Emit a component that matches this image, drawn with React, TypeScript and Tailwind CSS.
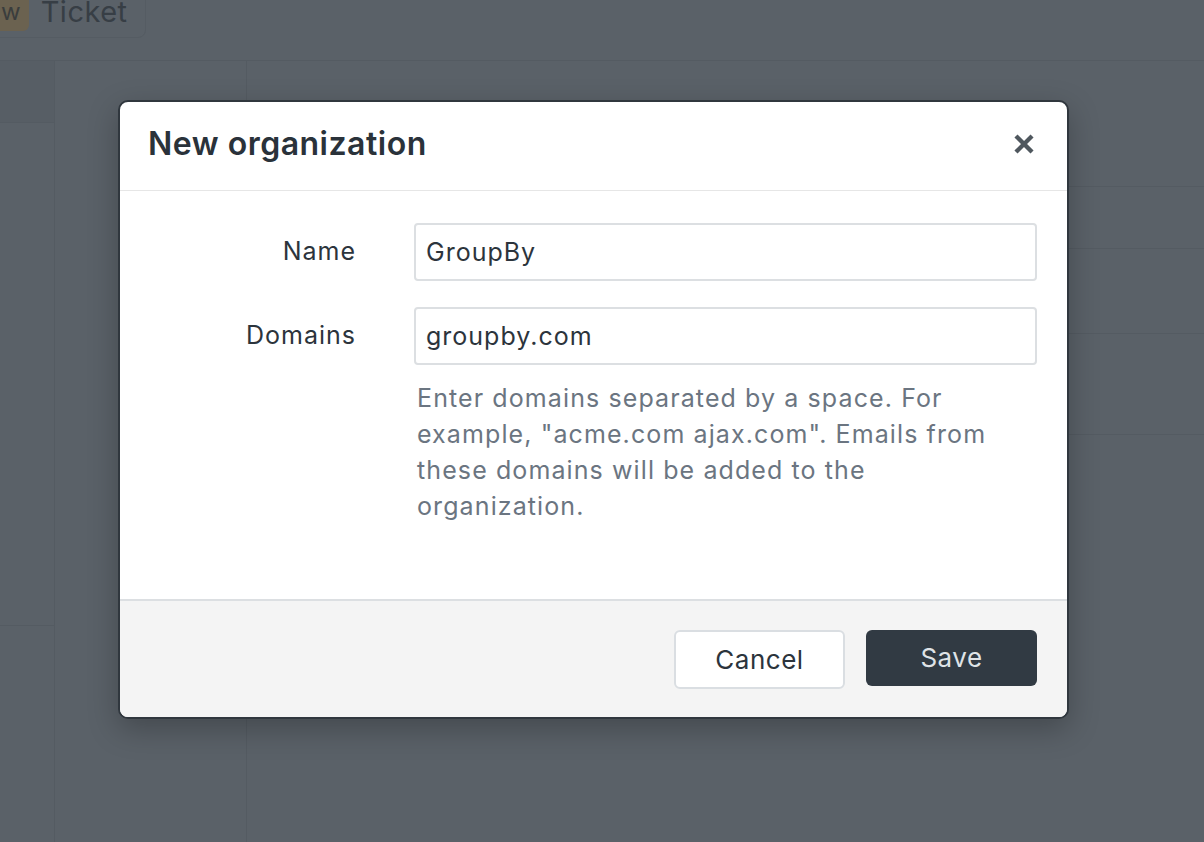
import { X } from 'lucide-react';

const font = { fontFamily: 'Inter, "Noto Sans", sans-serif' };

function Backdrop() {
    return (
        <div className="flex h-full flex-col">
            <div className="h-[61px] shrink-0 border-b border-[#545b62]">
                <div className="-mt-[14px] -ml-[12px] flex h-[52px] w-[158px] items-center gap-[12px] rounded-lg border border-[#555c63] bg-[#5a6168]">
                    <span className="rounded-md bg-[#6b6250] pl-[12px] pr-[8px] text-[24px] leading-[38px] text-[#3a3d3d]">w</span>
                    <span className="text-[29px] tracking-[0.5px] text-[#373e45]">Ticket</span>
                </div>
            </div>
            <div className="flex flex-1">
                <div className="flex w-[55px] flex-col border-r border-[#545b62]">
                    <div className="h-[62px] border-b border-[#545b62] bg-[#575e65]" />
                    <div className="h-[503px] border-b border-[#545b62]" />
                </div>
                <div className="w-[192px] border-r border-[#545b62]" />
                <div className="flex flex-1 flex-col">
                    <div className="h-[126px] border-b border-[#545b62]" />
                    <div className="h-[62px] border-b border-[#545b62]" />
                    <div className="h-[85px] border-b border-[#545b62]" />
                    <div className="h-[101px] border-b border-[#545b62]" />
                </div>
            </div>
        </div>
    );
}

export default function App() {
    return (
        <div className="relative h-screen w-full overflow-hidden bg-[#5a6168]" style={font}>
            <Backdrop />
            <div className="absolute left-[118px] top-[100px] w-[951px] overflow-hidden rounded-[10px] border-2 border-[#30373e] bg-white shadow-[0_10px_30px_rgba(0,0,0,0.25)]">
                <div className="flex h-[89px] items-center justify-between border-b border-[#e6e6e6] pb-[4px] pl-[28px] pr-[30px]">
                    <h1 className="text-[32px] font-semibold tracking-[0.5px] text-[#2a323a]">New organization</h1>
                    <X className="h-[26px] w-[26px] text-[#4f575e]" strokeWidth={4} strokeLinecap="square" />
                </div>
                <div className="grid grid-cols-[236px_1fr] gap-x-[58px] gap-y-[26px] pb-[75px] pr-[30px] pt-[32px] text-[25px] tracking-[1px] text-[#2c343c]">
                    <label className="flex h-[58px] items-center justify-end">Name</label>
                    <input
                        className="h-[58px] rounded-[4px] border-2 border-[#dcdfe2] px-[10px] text-[25px] tracking-[1px] text-[#2c343c] outline-none"
                        defaultValue="GroupBy"
                    />
                    <label className="flex h-[58px] items-center justify-end">Domains</label>
                    <div>
                        <input
                            className="h-[58px] w-full rounded-[4px] border-2 border-[#dcdfe2] px-[10px] text-[25px] tracking-[1px] text-[#2c343c] outline-none"
                            defaultValue="groupby.com"
                        />
                        <p className="mt-[15px] pl-[3px] pr-[30px] text-[25px] leading-[36px] tracking-[1.1px] text-[#6b7581]">
                            Enter domains separated by a space. For example, "acme.com ajax.com". Emails from these domains will be added to the organization.
                        </p>
                    </div>
                </div>
                <div className="flex h-[118px] items-center justify-end gap-[21px] border-t-2 border-[#dcdfe2] bg-[#f4f4f4] pr-[30px]">
                    <button className="h-[59px] w-[171px] rounded-[6px] border-2 border-[#dadee2] bg-white text-[26px] tracking-[0.5px] text-[#2c343c]">
                        Cancel
                    </button>
                    <button className="-mt-[3px] h-[56px] w-[171px] rounded-[6px] bg-[#313a43] text-[26px] tracking-[0.5px] text-[#dfe3e7]">
                        Save
                    </button>
                </div>
            </div>
        </div>
    );
}
